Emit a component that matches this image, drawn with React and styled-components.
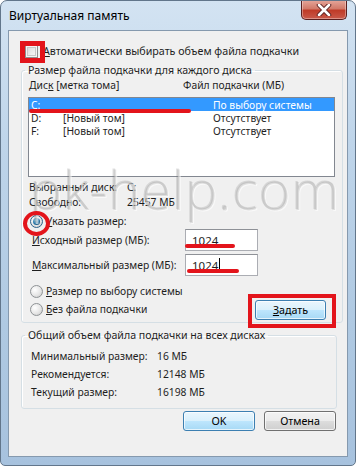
import React from 'react';
import styled, { createGlobalStyle, css } from 'styled-components';

const GlobalStyle = createGlobalStyle`
  html, body { margin: 0; padding: 0; background: #ffffff; }
  body {
    font-family: "Noto Sans", "Open Sans", sans-serif;
    font-size: 10.3px;
    color: #1e1e1e;
  }
`;

const Window = styled.div`
  position: relative;
  width: 356px;
  height: 466px;
  box-sizing: border-box;
  display: flex;
  flex-direction: column;
  border: 1px solid #62768b;
  border-radius: 7px 7px 5px 5px;
  background: linear-gradient(180deg, #d3e3f2 0%, #bfd5ea 30%, #afc9e2 70%, #a7c2de 100%);
  overflow: hidden;
`;

const TitleBar = styled.div`
  height: 29px;
  display: flex;
  align-items: flex-start;
  flex-shrink: 0;
`;

const Title = styled.div`
  font-size: 12px;
  line-height: 14px;
  color: #000;
  padding: 8px 0 0 8px;
`;

const CloseButton = styled.div`
  margin-left: auto;
  margin-right: 8px;
  margin-top: -1px;
  width: 46px;
  height: 20px;
  box-sizing: border-box;
  display: flex;
  align-items: center;
  justify-content: center;
  border: 1px solid #5a1f1f;
  border-top: none;
  border-radius: 0 0 5px 5px;
  background: linear-gradient(180deg, #e6a89c 0%, #d27a6a 45%, #bf3b28 55%, #c9594a 100%);
  box-shadow: inset 0 0 0 1px rgba(255, 255, 255, 0.35);
`;

const Client = styled.div`
  flex: 1;
  margin: 0 7px 8px 7px;
  background: #f0f0f0;
  border: 1px solid #8599ae;
  display: flex;
  flex-direction: column;
`;

const TopRow = styled.label`
  display: flex;
  align-items: center;
  gap: 5px;
  height: 16px;
  margin: 12px 0 0 16px;
  font-size: 10.7px;
`;

const CheckBox = styled.span`
  width: 13px;
  height: 13px;
  box-sizing: border-box;
  border: 1px solid #8e8f8f;
  background: linear-gradient(135deg, #d6d6d6 0%, #eeeeee 60%, #fbfbfb 100%);
  box-shadow: inset 0 0 0 1px #f4f4f4, inset 0 0 0 2px #c8c8c8;
`;

const Group = styled.fieldset`
  margin: ${p => p.$top}px ${p => p.$right}px 0 12px;
  padding: 0 0 ${p => p.$bottom}px 0;
  min-width: 0;
  border: 1px solid #d5dfe5;
  border-radius: 3px;
  box-shadow: inset 1px 1px 0 #fff;
`;

const Legend = styled.legend`
  margin-left: 3px;
  padding: 0 3px;
  line-height: 14px;
  height: 14px;
  font-size: 10.6px;
`;

const HeaderRow = styled.div`
  display: flex;
  height: 16px;
  align-items: center;
  padding-left: 7px;
`;

const Col = styled.span`
  width: ${p => p.$w}px;
  flex-shrink: 0;
  white-space: nowrap;
`;

const ListBox = styled.div`
  margin: 4px 7px 0 6px;
  height: 80px;
  box-sizing: border-box;
  border: 1px solid #828790;
  background: #fff;
`;

const ListRow = styled.div`
  display: flex;
  align-items: center;
  height: 13px;
  padding-left: 2px;
  white-space: nowrap;
  ${p => p.$selected && css`
    background: #3399ff;
    color: #fff;
  `}
`;

const InfoRows = styled.div`
  margin-top: 2px;
  padding-left: 7px;
`;

const InfoRow = styled.div`
  display: flex;
  align-items: center;
  height: 15px;
`;

const RadioRow = styled.label`
  display: flex;
  align-items: center;
  gap: 3px;
  height: 16px;
  margin-top: ${p => p.$top || 0}px;
  padding-left: 8px;
  white-space: nowrap;
`;

const Radio = styled.span`
  width: 13px;
  height: 13px;
  box-sizing: border-box;
  border-radius: 50%;
  border: 1px solid ${p => (p.$checked ? '#2c628b' : '#8f9396')};
  background: radial-gradient(circle at 35% 35%, #ffffff 0%, #e6e6e6 55%, #c4c4c4 100%);
  display: flex;
  align-items: center;
  justify-content: center;

  &::after {
    content: '';
    display: ${p => (p.$checked ? 'block' : 'none')};
    width: 7px;
    height: 7px;
    border-radius: 50%;
    background: radial-gradient(circle at 35% 30%, #8fd3f2 0%, #2f7fb0 45%, #163f60 100%);
  }
`;

const FieldRow = styled.div`
  display: flex;
  align-items: center;
  height: 22px;
  margin-top: ${p => p.$top || 0}px;
  padding-left: 10px;
`;

const FieldLabel = styled.span`
  width: 153px;
  flex-shrink: 0;
  white-space: nowrap;
`;

const Input = styled.div`
  width: 73px;
  height: 22px;
  box-sizing: border-box;
  border: 1px solid #abadb3;
  border-top-color: #8e9197;
  background: #fff;
  display: flex;
  align-items: center;
  padding-left: 6px;
  font-size: 11.5px;
`;

const Caret = styled.span`
  width: 1px;
  height: 14px;
  background: #000;
  margin-left: 1px;
`;

const SplitRow = styled.div`
  display: flex;
  align-items: flex-end;
  margin-top: 7px;
`;

const RadioColumn = styled.div`
  display: flex;
  flex-direction: column;
  gap: 2px;
  flex: 1;
`;

const Button = styled.div`
  width: ${p => p.$w || 72}px;
  height: 20px;
  box-sizing: border-box;
  display: flex;
  align-items: center;
  justify-content: center;
  border-radius: 3px;
  border: 1px solid ${p => (p.$blue ? '#3c7fb1' : '#707070')};
  background: ${p => (p.$blue
    ? 'linear-gradient(180deg, #eaf6fd 0%, #d9f0fc 50%, #bee6fd 51%, #a7d9f5 100%)'
    : 'linear-gradient(180deg, #f2f2f2 0%, #ebebeb 50%, #dddddd 51%, #cfcfcf 100%)')};
  box-shadow: inset 0 0 0 1px rgba(255, 255, 255, 0.7);
  color: #000;
  font-size: 10.7px;
`;

const ButtonSlot = styled.div`
  margin-right: 16px;
  transform: translateY(3px);
`;

const TotalRow = styled.div`
  display: flex;
  align-items: center;
  height: 18px;
  padding-left: 9px;
  margin-top: ${p => p.$top || 0}px;
`;

const Footer = styled.div`
  display: flex;
  justify-content: flex-end;
  gap: 9px;
  margin: 2px 11px 0 0;
`;

const Watermark = styled.div`
  position: absolute;
  left: 29px;
  top: 162px;
  font-family: "Open Sans", "Noto Sans", sans-serif;
  font-weight: 300;
  font-size: 54px;
  line-height: 52px;
  letter-spacing: 1px;
  color: rgba(150, 150, 150, 0.26);
  text-shadow: -1px -1px 0 rgba(100, 100, 100, 0.18), 1px 1px 0 rgba(255, 255, 255, 0.6);
  pointer-events: none;
  white-space: nowrap;
`;

const Mark = styled.div`
  position: absolute;
  box-sizing: border-box;
  left: ${p => p.$x}px;
  top: ${p => p.$y}px;
  width: ${p => p.$w}px;
  height: ${p => p.$h}px;
  ${p => p.$kind === 'box' && css`
    border: ${p.$b}px solid #e3141b;
  `}
  ${p => p.$kind === 'line' && css`
    background: #e3141b;
    border-radius: 2px;
  `}
  ${p => p.$kind === 'ring' && css`
    border: ${p.$b}px solid #e3141b;
    border-radius: 50%;
  `}
`;

const CloseGlyph = () => (
  <svg width="16" height="12" viewBox="0 0 16 12">
    <path d="M3 1 L13 11 M13 1 L3 11" stroke="#5a2020" strokeWidth="4.5" strokeLinecap="round" />
    <path d="M3 1 L13 11 M13 1 L3 11" stroke="#ffffff" strokeWidth="2.6" strokeLinecap="round" />
  </svg>
);

const drives = [
  { disk: 'C:', label: '', size: 'По выбору системы', selected: true },
  { disk: 'D:', label: '[Новый том]', size: 'Отсутствует' },
  { disk: 'F:', label: '[Новый том]', size: 'Отсутствует' },
];

const totals = [
  ['Минимальный размер:', '16 МБ'],
  ['Рекомендуется:', '12148 МБ'],
  ['Текущий размер:', '16198 МБ'],
];

export default function App() {
  return (
    <>
      <GlobalStyle />
      <Window>
        <TitleBar>
          <Title>Виртуальная память</Title>
          <CloseButton><CloseGlyph /></CloseButton>
        </TitleBar>
        <Client>
          <TopRow>
            <CheckBox />
            <span><u>А</u>втоматически выбирать объем файла подкачки</span>
          </TopRow>

          <Group $top={4} $right={4} $bottom={5}>
            <Legend>Размер файла подкачки для каждого диска</Legend>
            <HeaderRow>
              <Col $w={154}>Дис<u>к</u> [метка тома]</Col>
              <Col>Файл подкачки (МБ)</Col>
            </HeaderRow>
            <ListBox>
              {drives.map(d => (
                <ListRow key={d.disk} $selected={d.selected}>
                  <Col $w={32}>{d.disk}</Col>
                  <Col $w={150}>{d.label}</Col>
                  <Col>{d.size}</Col>
                </ListRow>
              ))}
            </ListBox>
            <InfoRows>
              <InfoRow><Col $w={98}>Выбранный диск:</Col><span>C:</span></InfoRow>
              <InfoRow><Col $w={98}>Свободно:</Col><span>25457 МБ</span></InfoRow>
            </InfoRows>
            <RadioRow $top={4}>
              <Radio $checked />
              <span><u>У</u>казать размер:</span>
            </RadioRow>
            <FieldRow>
              <FieldLabel><u>И</u>сходный размер (МБ):</FieldLabel>
              <Input>1024</Input>
            </FieldRow>
            <FieldRow $top={3}>
              <FieldLabel><u>М</u>аксимальный размер (МБ):</FieldLabel>
              <Input>1024<Caret /></Input>
            </FieldRow>
            <SplitRow>
              <RadioColumn>
                <RadioRow>
                  <Radio />
                  <span><u>Р</u>азмер по выбору системы</span>
                </RadioRow>
                <RadioRow>
                  <Radio />
                  <span><u>Б</u>ез файла подкачки</span>
                </RadioRow>
              </RadioColumn>
              <ButtonSlot>
                <Button $blue $w={71}><span><u>З</u>адать</span></Button>
              </ButtonSlot>
            </SplitRow>
          </Group>

          <Group $top={5} $right={10} $bottom={7}>
            <Legend>Общий объем файла подкачки на всех дисках</Legend>
            {totals.map(([k, v], i) => (
              <TotalRow key={k} $top={i === 0 ? 5 : 0}>
                <Col $w={126}>{k}</Col>
                <span>{v}</span>
              </TotalRow>
            ))}
          </Group>

          <Footer>
            <Button $blue>OK</Button>
            <Button>Отмена</Button>
          </Footer>
        </Client>

        <Watermark>pk-help.com</Watermark>

        <Mark $kind="box" $b={5} $x={19} $y={40} $w={25} $h={22} />
        <Mark $kind="line" $x={28} $y={108} $w={162} $h={4} />
        <Mark $kind="ring" $b={4} $x={22} $y={210} $w={27} $h={25} />
        <Mark $kind="line" $x={184} $y={243} $w={50} $h={4} />
        <Mark $kind="line" $x={186} $y={268} $w={52} $h={4} />
        <Mark $kind="box" $b={4} $x={247} $y={293} $w={88} $h={34} />
      </Window>
    </>
  );
}
